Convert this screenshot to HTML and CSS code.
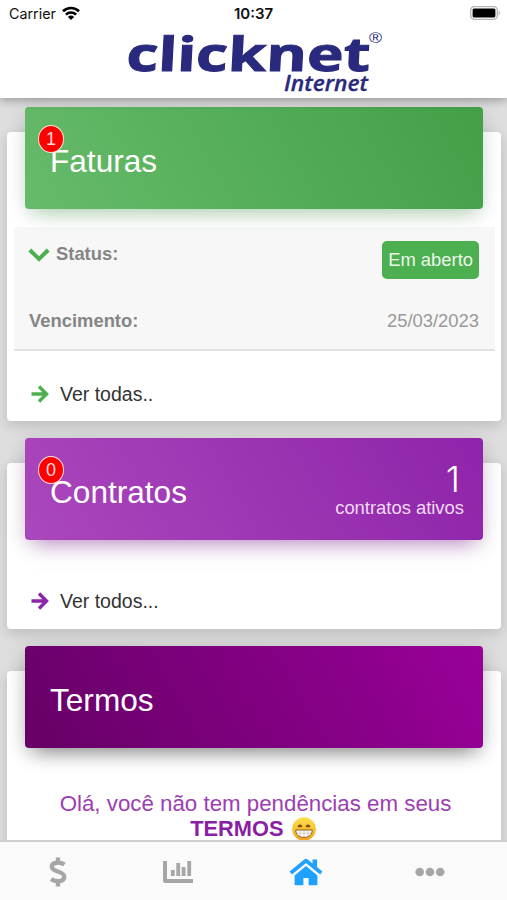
FILE: index.html
```
<!DOCTYPE html>
<html lang="pt-BR">
<head>
  <meta charset="UTF-8">
  <title>Clicknet Internet</title>
  <link rel="stylesheet" href="styles.css">
</head>
<body>
  <header class="topbar">
    <div class="statusbar">
      <div class="carrier">
        <span>Carrier</span>
        <svg width="18" height="14" viewBox="0 0 18 14">
          <g fill="none" stroke="#000" stroke-width="2.6">
            <path d="M1 5.200a11.600 11.600 0 0 1 16 0"/>
            <path d="M3.900 8.600a7.400 7.400 0 0 1 10.200 0"/>
          </g>
          <path d="M5.900 10.900a4.500 4.500 0 0 1 6.200 0L9 14z"/>
        </svg>
      </div>
      <div class="clock">10:37</div>
      <svg class="battery" width="31" height="14" viewBox="0 0 31 14">
        <rect x=".7" y=".7" width="26.600" height="12.600" rx="3.600" fill="#fff" stroke="#b5b5b5" stroke-width="1.300"/>
        <rect x="2.600" y="2.400" width="22.800" height="9.200" rx="1.600"/>
        <path d="M28.600 4.600c1.700.5 1.700 4.300 0 4.800z" fill="#b5b5b5"/>
      </svg>
    </div>
    <svg class="logo" width="270" height="70" viewBox="0 0 270 70">
      <text class="logo-name" transform="skewX(-3)" x="3" y="43" textLength="244" lengthAdjust="spacingAndGlyphs">clicknet</text>
      <text class="logo-sub" x="159" y="63" textLength="84" lengthAdjust="spacingAndGlyphs">Internet</text>
      <text class="logo-reg" x="244" y="15" textLength="13" lengthAdjust="spacingAndGlyphs">®</text>
    </svg>
  </header>

  <main class="content">
    <section class="card">
      <div class="card-header green">
        <span class="badge">1</span>
        <h2>Faturas</h2>
      </div>
      <div class="invoice">
        <div class="row">
          <div class="label">
            <svg width="22" height="14" viewBox="0 0 22 14"><path d="M1.800 2l9.200 9 9.200-9" fill="none" stroke="#4caf50" stroke-width="4"/></svg>
            <strong>Status:</strong>
          </div>
          <span class="tag">Em aberto</span>
        </div>
        <div class="row">
          <strong>Vencimento:</strong>
          <span class="date">25/03/2023</span>
        </div>
      </div>
      <a class="more">
        <svg width="18" height="18" viewBox="0 0 18 18"><path d="M.5 9h15M8 1.500L15.500 9 8 16.500" fill="none" stroke="#4caf50" stroke-width="3.400"/></svg>
        Ver todas..
      </a>
    </section>

    <section class="card">
      <div class="card-header purple">
        <span class="badge">0</span>
        <h2>Contratos</h2>
        <div class="total">
          <span class="number">1</span>
          <span>contratos ativos</span>
        </div>
      </div>
      <a class="more">
        <svg width="18" height="18" viewBox="0 0 18 18"><path d="M.5 9h15M8 1.500L15.500 9 8 16.500" fill="none" stroke="#8e24aa" stroke-width="3.400"/></svg>
        Ver todos...
      </a>
    </section>

    <section class="card terms">
      <div class="card-header dark">
        <h2>Termos</h2>
      </div>
      <p class="message">
        Olá, você não tem pendências em seus<br>
        <strong>TERMOS</strong>
        <svg width="24" height="24" viewBox="0 0 24 24">
          <defs>
            <linearGradient id="face" x1="0" y1="0" x2="0" y2="1">
              <stop offset="0" stop-color="#ffe14d"/>
              <stop offset="1" stop-color="#f3a01c"/>
            </linearGradient>
          </defs>
          <circle cx="12" cy="12" r="11.800" fill="url(#face)"/>
          <path d="M6.300 10.200q1.700-3.400 3.400 0M14.300 10.200q1.700-3.400 3.400 0" fill="none" stroke="#6b3f10" stroke-width="1.800"/>
          <path d="M3.800 13h16.400c0 4.800-3.400 7.400-8.200 7.400S3.800 17.800 3.800 13z" fill="#fff" stroke="#8a5a1c"/>
          <path d="M4.400 16.200h15.200M8 13v6.500M12 13v7M16 13v6.500" stroke="#b9b0a0" stroke-width=".6"/>
        </svg>
      </p>
    </section>
  </main>

  <nav class="tabbar">
    <a>
      <svg width="18" height="30" viewBox="0 0 18 30"><path d="M9 .5v5M9 24.500v5M15.500 7.500C11 4.700 2.800 4.900 2.800 9.800c0 5.600 12.500 3.800 12.500 10 0 5.200-8.200 5.700-13.300 2.400" fill="none" stroke="#a6a6a6" stroke-width="4.400"/></svg>
    </a>
    <a class="chart">
      <svg width="30" height="24" viewBox="0 0 30 24">
        <path d="M2 1v20h28" fill="none" stroke="#a6a6a6" stroke-width="4" stroke-linejoin="round"/>
        <path d="M9.800 10v6M15.200 3v13M20.600 7v9M26.200 1v15" stroke="#a6a6a6" stroke-width="3.800"/>
      </svg>
    </a>
    <a>
      <svg width="34" height="28" viewBox="0 0 34 28" fill="#1fa2ff">
        <path d="M17 8L5.600 17.400v9q0 .8.800.8h8V20h5.200v7.200h8q.8 0 .8-.8v-9z"/>
        <path d="M15.300 1.400q1.700-1.300 3.400 0L23.500 5.400V1.500h4.600v7.700l5.300 4.400-2.200 2.800L17 4.900 2.900 16.400.6 13.600z"/>
      </svg>
    </a>
    <a>
      <svg width="30" height="10" viewBox="0 0 30 10" fill="#a6a6a6">
        <circle cx="4.700" cy="5" r="4.300"/><circle cx="15" cy="5" r="4.300"/><circle cx="25.200" cy="5" r="4.300"/>
      </svg>
    </a>
  </nav>
</body>
</html>
```
FILE: styles.css
```
* {
  box-sizing: border-box;
}
body {
  margin: 0;
  height: 900px;
  display: flex;
  flex-direction: column;
  overflow: hidden;
  background-color: #dedede;
  font-family: "Liberation Sans", Arial, sans-serif;
  font-size: 18.400px;
  color: #333;
}
svg {
  display: block;
  flex: none;
}

/* top */
.topbar {
  position: relative;
  z-index: 2;
  height: 98px;
  flex: none;
  background-color: #fff;
  box-shadow: 0 1px 10px rgba(0,0,0,0.4);
}
.statusbar {
  display: grid;
  grid-template-columns: 1fr auto 1fr;
  align-items: center;
  height: 26px;
  padding: 0 6px 0 9px;
  font-family: Inter, sans-serif;
  font-size: 14.300px;
  color: #111;
}
.carrier {
  display: flex;
  align-items: center;
  gap: 6px;
}
.clock {
  margin-left: -3px;
  font-weight: 600;
  font-size: 15px;
}
.battery {
  justify-self: end;
}
.logo {
  margin: 2px 0 0 125px;
  overflow: visible;
  fill: #29297d;
}
.logo-name {
  font: bold 47px "Open Sans", sans-serif;
  stroke: #29297d;
  stroke-width: 1;
}
.logo-sub {
  font: italic 600 21px "Open Sans", sans-serif;
  stroke: #29297d;
  stroke-width: .3;
}
.logo-reg {
  font: 15px "Liberation Sans", sans-serif;
}

/* cards */
.content {
  flex: 1;
  min-height: 0;
  overflow: hidden;
  padding: 34px 6px 0 7px;
}
.card {
  display: flow-root;
  height: 289px;
  margin-bottom: 42px;
  border-radius: 4px;
  background-color: #fff;
  box-shadow: 0 4px 14px rgba(0,0,0,0.16);
}
.card + .card {
  height: 166px;
}
.card.terms {
  height: 220px;
}
.card-header {
  position: relative;
  display: flex;
  align-items: center;
  justify-content: space-between;
  height: 102px;
  margin: -25px 18px 0;
  padding: 7px 19px 0 25px;
  border-radius: 4px;
  color: #fff;
}
.card-header h2 {
  margin: 0;
  font-size: 31.600px;
  font-weight: normal;
}
.green {
  background: linear-gradient(60deg, #66bb6a, #43a047);
  box-shadow: 0 12px 20px -10px rgba(76,175,80,0.4), 0 4px 20px rgba(0,0,0,0.12);
}
.purple {
  background: linear-gradient(60deg, #ab47bc, #8e24aa);
  box-shadow: 0 12px 20px -10px rgba(156,39,176,0.5), 0 4px 20px rgba(0,0,0,0.14);
}
.dark {
  background: linear-gradient(60deg, #660066, #990099);
  box-shadow: 0 12px 20px -10px rgba(0,0,0,0.4), 0 4px 20px rgba(0,0,0,0.2);
}
.badge {
  position: absolute;
  left: 13px;
  top: 18px;
  width: 26px;
  height: 28px;
  border: 1px solid #ffe0d8;
  border-radius: 50%;
  background-color: #f00;
  color: #ffdcdc;
  font-size: 18px;
  line-height: 27px;
  text-align: center;
}
.total {
  display: flex;
  flex-direction: column;
  align-items: flex-end;
  margin-top: -4px;
  color: #f3d9f7;
}
.total .number {
  margin-right: 4px;
  color: #fff;
  font-family: Inter, sans-serif;
  font-weight: 300;
  font-size: 36px;
  line-height: 35px;
}

/* invoice */
.invoice {
  height: 124px;
  margin: 18px 6px 0 7px;
  padding: 14px 16px 0 15px;
  border-bottom: 2px solid #e2e2e2;
  background-color: #f7f7f7;
  color: #858585;
}
.row {
  display: flex;
  align-items: center;
  justify-content: space-between;
  height: 38px;
}
.row + .row {
  margin-top: 23px;
}
.label {
  display: flex;
  align-items: center;
  gap: 6px;
  margin: -12px 0 0 -1px;
}
.label svg {
  margin-top: 2px;
}
.tag {
  padding: 0 6px;
  border-radius: 5px;
  background-color: #4caf50;
  color: #eaf8ea;
  line-height: 38px;
}
.date {
  color: #999;
}
.more {
  display: flex;
  align-items: center;
  gap: 11px;
  height: 24px;
  margin: 31px 0 0 24px;
  font-size: 19.500px;
}
.purple + .more {
  margin-top: 49px;
}
.message {
  margin: 43px 0 0 3px;
  color: #9c3db3;
  font-size: 22.300px;
  line-height: 25px;
  text-align: center;
}
.message strong {
  margin-left: -5px;
  margin-right: 2px;
  color: #8a1fa5;
  font-size: 21.800px;
}
.message svg {
  display: inline-block;
  vertical-align: -5px;
}

/* tabs */
.tabbar {
  display: grid;
  grid-template-columns: repeat(4, 124px);
  justify-content: center;
  align-items: center;
  height: 60px;
  padding: 2px 19px 0 0;
  flex: none;
  border-top: 2px solid #cfcfcf;
  background-color: #fafafa;
}
.tabbar a {
  display: flex;
  justify-content: center;
}
.tabbar .chart {
  padding-right: 8px;
}
```
